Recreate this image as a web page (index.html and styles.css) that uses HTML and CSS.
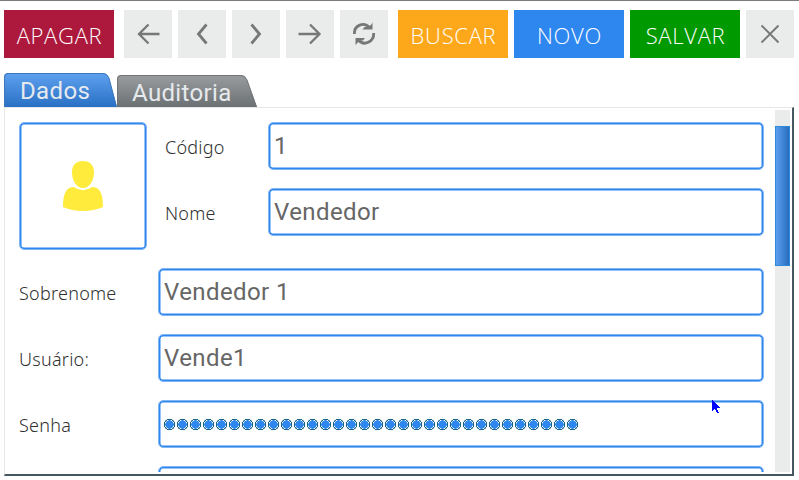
FILE: index.html
```html
<!DOCTYPE html>
<html lang="pt-BR">
<head>
<meta charset="utf-8">
<title>Vendedor</title>
<link rel="stylesheet" href="styles.css">
</head>
<body>
<header class="toolbar">
  <button class="btn danger"><span>APAGAR</span></button>
  <div class="nav">
    <button class="icon" aria-label="Primeiro"><svg viewBox="0 0 48 48"><path d="M35.500 24H14.500M24.500 14.500L15 24l9.500 9.500"/></svg></button>
    <button class="icon" aria-label="Anterior"><svg viewBox="0 0 48 48"><path class="bold" d="M28.500 14.500L20.500 24l8 9.500"/></svg></button>
    <button class="icon" aria-label="Seguinte"><svg viewBox="0 0 48 48"><path class="bold" d="M19.500 14.500L27.500 24l-8 9.500"/></svg></button>
    <button class="icon" aria-label="Último"><svg viewBox="0 0 48 48"><path d="M12.500 24h21M24 14.500l9.500 9.500-9.500 9.500"/></svg></button>
    <button class="icon" aria-label="Atualizar"><svg viewBox="0 0 48 48"><path class="bold" d="M14.300 24C14 15 24 11.500 29.500 17.500M33.700 23C34 32 24 36.500 18.500 30"/><path class="fill" d="M32.500 12v7.500H22.500l2-2.500h4.200l3-3zM15.500 35V28h9.500l-2 2.500h-3.500l-2.500 3z"/></svg></button>
  </div>
  <button class="btn warn"><span>BUSCAR</span></button>
  <button class="btn info"><span>NOVO</span></button>
  <button class="btn ok"><span>SALVAR</span></button>
  <button class="icon" aria-label="Fechar"><svg viewBox="0 0 48 48"><path class="thin" d="M15.500 15.500l17 17M32.500 15.500l-17 17"/></svg></button>
</header>
<nav class="tabs">
  <div class="tab active">
    <svg viewBox="0 0 113 34"><defs><linearGradient id="blue" x2="0" y2="1"><stop stop-color="#5ea1ef"/><stop offset="1" stop-color="#2970c4"/></linearGradient></defs><path d="M0 34V4Q0 0 4 0H99Q103 0 105 5L113 34z" fill="url(#blue)"/><path d="M.5 34V4Q.5.5 4 .5H99Q103 .5 105 5L112.500 34" fill="none" stroke="#3c77b8"/></svg>
    <span>Dados</span>
  </div>
  <div class="tab">
    <svg viewBox="0 0 140 32"><defs><linearGradient id="grey" x2="0" y2="1"><stop stop-color="#9a9d9f"/><stop offset="1" stop-color="#6b7073"/></linearGradient></defs><path d="M0 32V4Q0 0 4 0H124Q128 0 130 5L140 32z" fill="url(#grey)"/><path d="M.5 32V4Q.5.5 4 .5H124Q128 .5 130 5L139.500 32" fill="none" stroke="#707477"/></svg>
    <span>Auditoria</span>
  </div>
</nav>
<main class="panel">
  <form class="form">
    <div class="profile">
      <div class="avatar"><svg viewBox="0 0 40 51"><path d="M20 0C27 0 31 4 31 11.500C31 19 27 27 20 27S9 19 9 11.500C9 4 13 0 20 0zM11 26Q20 32.500 29 26C36 26 40 31 40 46Q31 50 20 50T0 46C0 31 4 26 11 26z" fill="#ffeb3b"/></svg></div>
      <div class="fields">
        <label class="row"><span class="label">Código</span><span class="input">1</span></label>
        <label class="row"><span class="label">Nome</span><span class="input">Vendedor</span></label>
      </div>
    </div>
    <label class="row wide"><span class="label">Sobrenome</span><span class="input">Vendedor 1</span></label>
    <label class="row wide"><span class="label">Usuário:</span><span class="input">Vende1</span></label>
    <label class="row wide"><span class="label">Senha</span><span class="input"><i class="dots"></i></span></label>
    <label class="row wide"><span class="label"></span><span class="input"></span></label>
  </form>
  <div class="scroll"><div class="thumb"></div></div>
</main>
<svg class="cursor" viewBox="0 0 9 15" shape-rendering="crispEdges"><path d="M0 1h1v1h1v1h1v1h1v1h1v1h1v1h1v1h1v1H5v2h1v2h1v1H5v-1H4v-2H3v-1H2v1H1v1H0z" fill="#0000ff"/></svg>
</body>
</html>
```
FILE: styles.css
```css
* { box-sizing: border-box; }

body {
  margin: 0;
  width: 799px;
  height: 480px;
  overflow: hidden;
  position: relative;
  display: flex;
  flex-direction: column;
  background: #fff;
  border-top: 1px solid #7d7b7d;
  font-family: Roboto, sans-serif;
}

.toolbar {
  display: flex;
  gap: 6px;
  height: 57px;
  padding: 9px 5px 0 4px;
}

.nav { display: flex; gap: 6px; margin: 0 4px; }

button { border: 0; padding: 0; height: 48px; }

.btn {
  width: 110px;
  color: #fff;
  font: 300 22px/48px "Open Sans", sans-serif;
  letter-spacing: 0.7px;
  white-space: nowrap;
}

.btn span { display: block; padding: 1px 0 0 1px; }

.danger { background: #ad193d; }
.warn { background: #fda81a; }
.info { background: #2e86ef; }
.ok { background: #009900; }

.icon { width: 48px; background: #eaecec; }
.icon svg { display: block; width: 48px; height: 48px; }
.icon path { fill: none; stroke: #777; stroke-width: 2.3; }
.icon .bold { stroke-width: 2.8; }
.icon .thin { stroke-width: 1.9; }
.icon .fill { fill: #777; stroke: none; }

.tabs {
  display: flex;
  align-items: flex-end;
  height: 49px;
  padding-left: 4px;
}

.tab {
  display: grid;
  grid-template-rows: 100%;
  width: 140px;
  height: 32px;
}

.tab.active { width: 113px; height: 34px; }
.tab > * { grid-area: 1 / 1; }
.tab svg { width: 100%; height: 100%; }

.tab span {
  padding-left: 15px;
  color: #e6eaee;
  font-size: 24px;
  line-height: 36px;
  letter-spacing: 0.35px;
}

.tab.active span { padding-left: 16px; }

.panel {
  display: flex;
  justify-content: space-between;
  width: 790px;
  height: 369px;
  margin-left: 4px;
  padding: 2px 2px 2px 0;
  border: 1px solid #e6e8e8;
  border-right: 2px solid #47575f;
  border-bottom: 2px solid #47575f;
}

.form {
  display: flex;
  flex-direction: column;
  gap: 18px;
  width: 759px;
  height: 362px;
  padding: 12px 0 0 14px;
  overflow: hidden;
}

.profile { display: flex; gap: 18px; flex: none; }

.avatar,
.input {
  border: 1px solid #80b6f6;
  border-radius: 5px;
  box-shadow: inset 0 0 0 1.5px #2e86ef;
}

.avatar {
  display: grid;
  place-items: center;
  width: 128px;
  height: 128px;
}

.avatar svg { width: 40px; height: 51px; }

.fields { display: flex; flex-direction: column; gap: 18px; flex: 1; }

.row { display: flex; flex: none; height: 48px; }

.label {
  width: 103px;
  color: #303030;
  font: 300 18px/50px "Noto Sans", sans-serif;
  letter-spacing: 0.25px;
}

.wide .label { width: 139px; }

.input {
  flex: 1;
  padding: 1px 0 0 5px;
  color: #666;
  font-size: 24px;
  line-height: 45px;
  letter-spacing: 0.4px;
}

.dots {
  display: block;
  width: 416px;
  height: 13px;
  margin: 16px 0 0 -1px;
  background: radial-gradient(circle at 6.500px 6.500px, #2e86ef 0 4px, #fff 4.400px 4.600px, #176587 5px 5.400px, transparent 5.900px) 0 0 / 13px 13px;
}

.scroll {
  width: 15px;
  height: 362px;
  padding-top: 16px;
  background: #eaecec;
}

.thumb {
  height: 140px;
  border: 1px solid #2b88db;
  background: linear-gradient(90deg, #5ba0ef, #286cbd);
}

.cursor {
  position: absolute;
  left: 712px;
  top: 398px;
  width: 9px;
  height: 15px;
}
```
